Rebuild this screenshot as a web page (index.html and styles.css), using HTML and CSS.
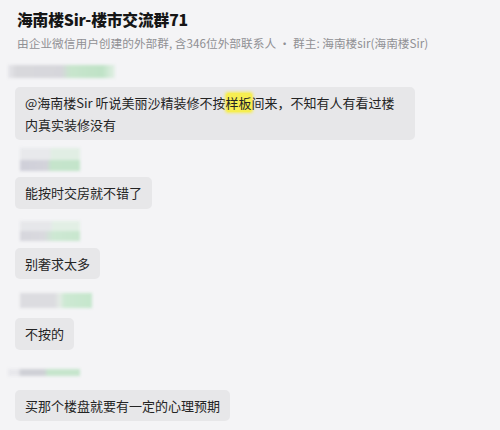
FILE: index.html
```html
<!DOCTYPE html>
<html lang="zh-CN">
<head>
<meta charset="utf-8">
<title>海南楼Sir-楼市交流群71</title>
<link rel="stylesheet" href="styles.css">
</head>
<body>
<div class="page">
  <header class="head">
    <h1 class="title">海南楼Sir-楼市交流群71</h1>
    <p class="sub">由企业微信用户创建的外部群, 含346位外部联系人 · 群主: 海南楼sir(海南楼Sir)</p>
  </header>
  <div class="chat">
    <div class="msg m1">
      <div class="name n1"><span class="ln"></span></div>
      <div class="bubble">@海南楼Sir 听说美丽沙精装修不按<mark class="hl">样板</mark>间来，不知有人有看过楼<br>内真实装修没有</div>
    </div>
    <div class="msg m2">
      <div class="name n2"><span class="up"></span><span class="ln"></span></div>
      <div class="bubble">能按时交房就不错了</div>
    </div>
    <div class="msg m3">
      <div class="name n3"><span class="up"></span><span class="ln"></span></div>
      <div class="bubble">别奢求太多</div>
    </div>
    <div class="msg m4">
      <div class="name n4"><span class="ln"></span></div>
      <div class="bubble">不按的</div>
    </div>
    <div class="msg m5">
      <div class="name n5"><span class="ln"></span></div>
      <div class="bubble">买那个楼盘就要有一定的心理预期</div>
    </div>
  </div>
</div>
</body>
</html>
```
FILE: styles.css
```css
html, body {
  margin: 0;
  padding: 0;
  background: #f4f4f6;
}
body {
  font-family: "Noto Sans CJK SC", "Noto Sans", sans-serif;
  color: #2b2b2b;
  width: 500px;
  height: 430px;
  overflow: hidden;
}
.page {
  padding: 10px 0 0 15px;
}
.head {
  display: flex;
  flex-direction: column;
}
.title {
  margin: 0 0 0 2px;
  font-size: 15.7px;
  line-height: 20px;
  font-weight: 900;
  color: #161616;
  letter-spacing: -0.1px;
}
.sub {
  margin: 5px 0 0 2px;
  font-size: 11.7px;
  line-height: 16px;
  color: #909094;
}
.chat {
  display: flex;
  flex-direction: column;
}
.msg {
  display: flex;
  flex-direction: column;
  align-items: flex-start;
}
.name {
  display: flex;
  flex-direction: column;
  filter: blur(1.6px);
}
.name .up {
  display: block;
  width: 100%;
  flex: 1;
}
.name .ln {
  display: block;
  width: 100%;
  flex: 1;
}
.bubble {
  background: #e7e7e9;
  border-radius: 5px;
  padding: 5px 10px;
  font-size: 13px;
  line-height: 21.5px;
  color: #242424;
}
.m1 .bubble {
  padding-right: 20px;
}
.hl {
  background: #f6ee52;
  color: #242424;
  box-shadow: 0 0 3px 1px #f6ee52;
  border-radius: 2px;
}

/* message 1 */
.m1 { margin-top: 14px; }
.n1 {
  width: 107px;
  height: 13px;
  margin: 0 0 9px -7px;
}
.n1 .ln {
  background: linear-gradient(90deg, #e6e6ea 0%, #d8d8dc 8%, #d6d6db 50%, #c8e5cd 58%, #bfe2c6 88%, #e3efe6 100%);
}
/* message 2 */
.m2 { margin-top: 8px; }
.n2 {
  width: 60px;
  height: 23px;
  margin: 0 0 6px 5px;
}
.n2 .up {
  background: linear-gradient(90deg, #e8e9ec 0%, #e8e9ec 50%, #e1eee4 52%, #e1eee4 100%);
}
.n2 .ln {
  background: linear-gradient(90deg, #cfcfd9 0%, #d3d3da 45%, #c5e4cb 52%, #c3e4ca 100%);
}
/* message 3 */
.m3 { margin-top: 12px; }
.n3 {
  width: 60px;
  height: 20px;
  margin: 0 0 7px 5px;
}
.n3 .up {
  background: linear-gradient(90deg, #e6e7ea 0%, #e6e7ea 50%, #e2efe5 55%, #e2efe5 100%);
}
.n3 .ln {
  background: linear-gradient(90deg, #d6d6dc 0%, #d9d9de 40%, #cde8d3 55%, #c8e6ce 100%);
}
/* message 4 */
.m4 { margin-top: 14px; }
.n4 {
  width: 72px;
  height: 15px;
  margin: 0 0 10px 5px;
}
.n4 .ln {
  background: linear-gradient(90deg, #dcdce0 0%, #dcdce0 48%, #e4ebe6 55%, #cde9d3 62%, #c5e6cc 100%);
}
/* message 5 */
.m5 { margin-top: 19px; }
.n5 {
  width: 72px;
  height: 7px;
  margin: 0 0 14px -7px;
}
.n5 .ln {
  background: linear-gradient(90deg, #e8e8ec 0%, #e8e8ec 14%, #cfd0d6 18%, #cfd0d6 50%, #c6e5cd 56%, #c6e5cd 100%);
}
```
